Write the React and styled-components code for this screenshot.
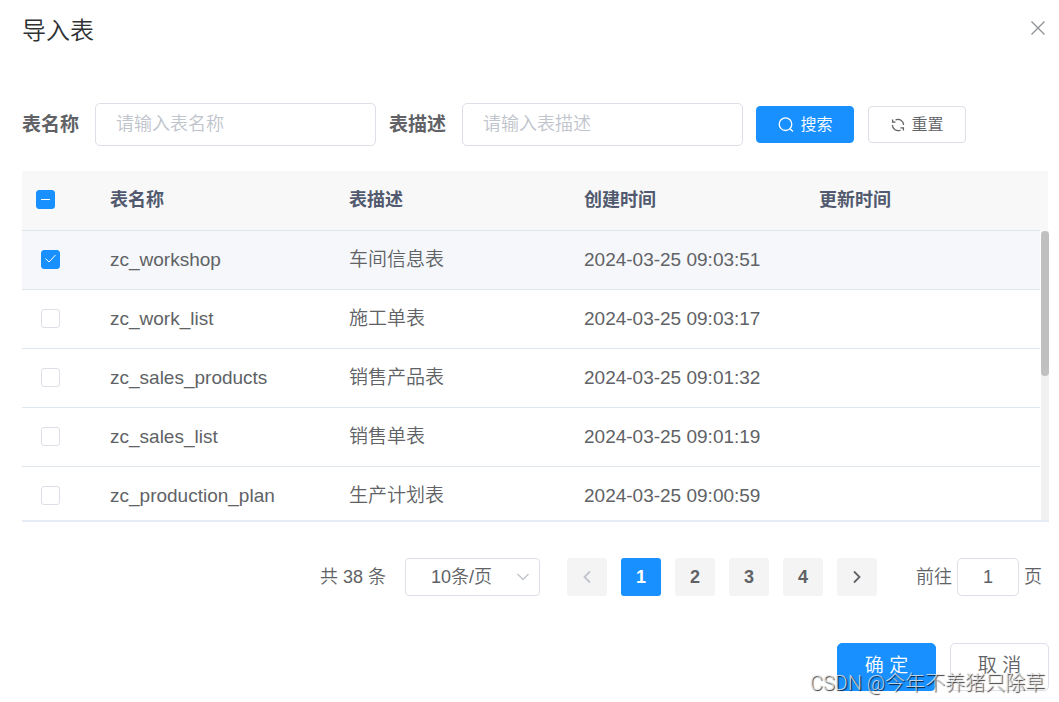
import React, { useState } from "react";
import styled, { createGlobalStyle } from "styled-components";

const ROWS = [
  { name: "zc_workshop", description: "车间信息表", created: "2024-03-25 09:03:51" },
  { name: "zc_work_list", description: "施工单表", created: "2024-03-25 09:03:17" },
  { name: "zc_sales_products", description: "销售产品表", created: "2024-03-25 09:01:32" },
  { name: "zc_sales_list", description: "销售单表", created: "2024-03-25 09:01:19" },
  { name: "zc_production_plan", description: "生产计划表", created: "2024-03-25 09:00:59" },
];

const PAGES = [1, 2, 3, 4];

const App = () => {
  const [selected, setSelected] = useState(["zc_workshop"]);
  const [page, setPage] = useState(1);

  const toggleRow = (name) => {
    setSelected((prev) =>
      prev.includes(name) ? prev.filter((n) => n !== name) : [...prev, name]
    );
  };

  const allSelected = selected.length === ROWS.length;

  const toggleAll = () => {
    setSelected(allSelected ? [] : ROWS.map((row) => row.name));
  };

  return (
    <Dialog role="dialog" aria-labelledby="dialog-title">
      <GlobalStyle />
      <Header>
        <Title id="dialog-title">导入表</Title>
        <CloseButton type="button" aria-label="关闭">
          <svg width="14" height="14" viewBox="0 0 14 14">
            <path d="M0.5 0.5l13 13M13.5 0.5l-13 13" />
          </svg>
        </CloseButton>
      </Header>

      <SearchForm onSubmit={(e) => e.preventDefault()}>
        <Field>
          <Label htmlFor="table-name">表名称</Label>
          <TextInput id="table-name" placeholder="请输入表名称" />
        </Field>
        <Field>
          <Label htmlFor="table-desc">表描述</Label>
          <TextInput id="table-desc" placeholder="请输入表描述" />
        </Field>
        <FormActions>
          <SmallButton type="submit" $primary>
            <svg width="16" height="16" viewBox="0 0 16 16">
              <circle cx="7.5" cy="7.2" r="6.3" />
              <path d="M12 11.7l3 2.8" />
            </svg>
            搜索
          </SmallButton>
          <SmallButton type="reset">
            <svg width="14" height="14" viewBox="0 0 14 14">
              <path d="M4.6 1.9A5.6 5.6 0 0 1 12.6 7M9.4 12.1A5.6 5.6 0 0 1 1.4 7M1.6 1.4v2.8h2.9M12.4 12.6V9.8H9.5" />
            </svg>
            重置
          </SmallButton>
        </FormActions>
      </SearchForm>

      <TablePanel>
        <Scroller>
          <Table>
            <colgroup>
              <CheckCol />
              <NameCol />
              <col />
              <col />
              <col />
            </colgroup>
            <thead>
              <tr>
                <HeadCell>
                  <Checkbox
                    type="checkbox"
                    aria-label="全选"
                    checked={allSelected}
                    $partial={selected.length > 0 && !allSelected}
                    onChange={toggleAll}
                  />
                </HeadCell>
                <HeadCell>表名称</HeadCell>
                <HeadCell>表描述</HeadCell>
                <HeadCell>创建时间</HeadCell>
                <HeadCell>更新时间</HeadCell>
              </tr>
            </thead>
            <tbody>
              {ROWS.map((row, index) => (
                <Row key={row.name} $active={index === 0}>
                  <CheckCell>
                    <Checkbox
                      type="checkbox"
                      aria-label={row.name}
                      checked={selected.includes(row.name)}
                      onChange={() => toggleRow(row.name)}
                    />
                  </CheckCell>
                  <Cell>{row.name}</Cell>
                  <Cell>{row.description}</Cell>
                  <Cell>{row.created}</Cell>
                  <Cell />
                </Row>
              ))}
            </tbody>
          </Table>
        </Scroller>
        <Gutter>
          <GutterHead />
          <Track>
            <Thumb />
          </Track>
        </Gutter>
      </TablePanel>

      <Pagination aria-label="分页">
        <Total>共 38 条</Total>
        <SizeBox>
          <SizeSelect aria-label="每页条数" defaultValue="10">
            <option value="10">10条/页</option>
            <option value="20">20条/页</option>
          </SizeSelect>
          <SelectArrow width="12" height="8" viewBox="0 0 12 8">
            <path d="M0.5 1l5.5 5.5L11.5 1" />
          </SelectArrow>
        </SizeBox>
        <Pager>
          <PageButton
            type="button"
            aria-label="上一页"
            disabled={page === 1}
            onClick={() => setPage(page - 1)}
          >
            <svg width="8" height="14" viewBox="0 0 8 14">
              <path d="M7 1.5L1.5 7L7 12.5" />
            </svg>
          </PageButton>
          {PAGES.map((n) => (
            <PageButton
              key={n}
              type="button"
              $current={n === page}
              onClick={() => setPage(n)}
            >
              {n}
            </PageButton>
          ))}
          <PageButton
            type="button"
            aria-label="下一页"
            disabled={page === 4}
            onClick={() => setPage(page + 1)}
          >
            <svg width="8" height="14" viewBox="0 0 8 14">
              <path d="M1 1.5L6.5 7L1 12.5" />
            </svg>
          </PageButton>
        </Pager>
        <Jump>
          前往
          <JumpInput aria-label="前往页" value={page} readOnly />
          页
        </Jump>
      </Pagination>

      <Footer>
        <LargeButton type="button" $primary>
          确 定
        </LargeButton>
        <LargeButton type="button">取 消</LargeButton>
        <Watermark>CSDN @今年不养猪只除草</Watermark>
      </Footer>
    </Dialog>
  );
};

export default App;

const GlobalStyle = createGlobalStyle`
  * {
    box-sizing: border-box;
  }

  body {
    margin: 0;
    background: #fff;
    color: #606266;
    font-family: "Liberation Sans", "Noto Sans CJK SC", sans-serif;
    font-size: 18px;
    font-weight: 350;
    line-height: 24px;
  }

  button,
  input,
  select {
    margin: 0;
    font-family: inherit;
    font-weight: inherit;
    line-height: inherit;
  }

  svg {
    fill: none;
    stroke: currentColor;
  }
`;

const Dialog = styled.div`
  padding: 14px 10px 10px 22px;
`;

const Header = styled.header`
  display: flex;
  justify-content: space-between;
  align-items: flex-start;
  height: 89px;
`;

const Title = styled.h1`
  margin: 0;
  color: #303133;
  font-size: 24px;
  font-weight: 350;
  line-height: 34px;
`;

const CloseButton = styled.button`
  display: flex;
  padding: 7px 4px;
  border: none;
  background: none;
  color: #909399;

  svg {
    stroke-width: 1.4;
  }
`;

const SearchForm = styled.form`
  display: flex;
  align-items: center;
  gap: 13px;
  margin-bottom: 25px;
`;

const Field = styled.div`
  display: flex;
  align-items: center;
  gap: 16px;
`;

const Label = styled.label`
  font-size: 19px;
  font-weight: 700;
  white-space: nowrap;
`;

const TextInput = styled.input`
  width: 281px;
  height: 43px;
  padding: 0 20px;
  border: 1px solid #dcdfe6;
  border-radius: 5px;
  font-size: 18px;
  outline: none;

  &::placeholder {
    color: #c0c4cc;
  }
`;

const FormActions = styled.div`
  display: flex;
  gap: 14px;
`;

const Button = styled.button`
  display: flex;
  align-items: center;
  justify-content: center;
  border: 1px solid ${({ $primary }) => ($primary ? "#1890ff" : "#dcdfe6")};
  background: ${({ $primary }) => ($primary ? "#1890ff" : "#fff")};
  color: ${({ $primary }) => ($primary ? "#fff" : "#606266")};
  white-space: nowrap;
`;

const SmallButton = styled(Button)`
  gap: 7px;
  width: 98px;
  height: 37px;
  border-radius: 4px;
  font-size: 16px;

  svg {
    stroke-width: 1.3;
  }
`;

const LargeButton = styled(Button)`
  width: 99px;
  height: 48px;
  padding-bottom: 4px;
  border-radius: 5px;
  font-size: 19px;
`;

const TablePanel = styled.div`
  display: flex;
  height: 351px;
  border-bottom: 2px solid #e6ebf5;
`;

const Scroller = styled.div`
  flex: 1;
  overflow: hidden;
`;

const Table = styled.table`
  width: 100%;
  table-layout: fixed;
  border-collapse: separate;
  border-spacing: 0;
`;

const CheckCol = styled.col`
  width: 74px;
`;

const NameCol = styled.col`
  width: 239px;
`;

const HeadCell = styled.th`
  height: 60px;
  padding: 0 14px 2px;
  border-bottom: 1px solid #dfe6ec;
  background: #f8f8f9;
  color: #515a6e;
  font-size: 18px;
  font-weight: 700;
  text-align: left;
`;

const Row = styled.tr`
  background: ${({ $active }) => ($active ? "#f5f7fa" : "#fff")};
`;

const Cell = styled.td`
  height: 59px;
  padding: 0 14px;
  border-bottom: 1px solid #dfe6ec;
  font-size: 19px;
  white-space: nowrap;
`;

const CheckCell = styled(Cell)`
  padding: 0 19px 2px;
`;

const CHECK_MARK =
  "url(\"data:image/svg+xml,%3Csvg xmlns='http://www.w3.org/2000/svg' viewBox='0 0 19 19' fill='none' stroke='white'%3E%3Cpath d='M4.5 8.5l3.5 3.5l6.5-7'/%3E%3C/svg%3E\")";

const PARTIAL_MARK = "linear-gradient(#fff, #fff)";

const Checkbox = styled.input`
  display: block;
  width: 19px;
  height: 19px;
  margin: 0;
  appearance: none;
  border: 1px solid ${({ checked, $partial }) =>
    checked || $partial ? "#1890ff" : "#dcdfe6"};
  border-radius: 3px;
  background-color: ${({ checked, $partial }) =>
    checked || $partial ? "#1890ff" : "#fff"};
  background-image: ${({ checked, $partial }) =>
    $partial ? PARTIAL_MARK : checked ? CHECK_MARK : "none"};
  background-origin: border-box;
  background-position: center;
  background-repeat: no-repeat;
  background-size: ${({ $partial }) => ($partial ? "9px 1px" : "19px 19px")};
`;

const Gutter = styled.div`
  display: flex;
  flex-direction: column;
  width: 9px;
`;

const GutterHead = styled.div`
  height: 60px;
  margin-right: 1px;
  background: #f8f8f9;
`;

const Track = styled.div`
  flex: 1;
  margin-left: 1px;
  background: #f1f1f1;
`;

const Thumb = styled.div`
  height: 50%;
  border-radius: 4px;
  background: #c0c0c0;
`;

const Pagination = styled.nav`
  display: flex;
  align-items: center;
  justify-content: flex-end;
  margin-top: 36px;
  padding-right: 7px;
`;

const Total = styled.span`
  margin-right: 19px;
`;

const SizeBox = styled.div`
  display: grid;
  align-items: center;
  width: 135px;
  margin-right: 27px;
`;

const SizeSelect = styled.select`
  grid-area: 1 / 1;
  width: 100%;
  height: 38px;
  padding: 0 25px;
  appearance: none;
  border: 1px solid #dcdfe6;
  border-radius: 4px;
  background: #fff;
  color: #606266;
  font-size: 18px;
`;

const SelectArrow = styled.svg`
  grid-area: 1 / 1;
  justify-self: end;
  margin-right: 11px;
  color: #c0c4cc;
  stroke-width: 1.3;
  pointer-events: none;
`;

const Pager = styled.div`
  display: flex;
  gap: 14px;
  margin-right: 39px;
`;

const PageButton = styled.button`
  display: flex;
  align-items: center;
  justify-content: center;
  width: 40px;
  height: 38px;
  padding: 0;
  border: none;
  border-radius: 3px;
  background: ${({ $current }) => ($current ? "#1890ff" : "#f4f4f5")};
  color: ${({ $current }) => ($current ? "#fff" : "#606266")};
  font-size: 18px;
  font-weight: 700;

  svg {
    stroke-width: 1.8;
  }

  &:disabled {
    color: #c0c4cc;
  }
`;

const Jump = styled.div`
  display: flex;
  align-items: center;
  gap: 5px;
`;

const JumpInput = styled.input`
  width: 62px;
  height: 38px;
  border: 1px solid #dcdfe6;
  border-radius: 5px;
  color: #606266;
  font-size: 18px;
  text-align: center;
`;

const Footer = styled.footer`
  position: relative;
  display: flex;
  justify-content: flex-end;
  gap: 14px;
  margin-top: 47px;
`;

const Watermark = styled.span`
  position: absolute;
  right: 4px;
  bottom: -6px;
  color: rgba(235, 235, 235, 0.8);
  font-family: Roboto, "Noto Sans CJK SC", sans-serif;
  font-size: 20px;
  font-weight: 300;
  line-height: 28px;
  text-shadow: 1px 1px 1px rgba(0, 0, 0, 0.8);
  white-space: nowrap;
  pointer-events: none;
`;
